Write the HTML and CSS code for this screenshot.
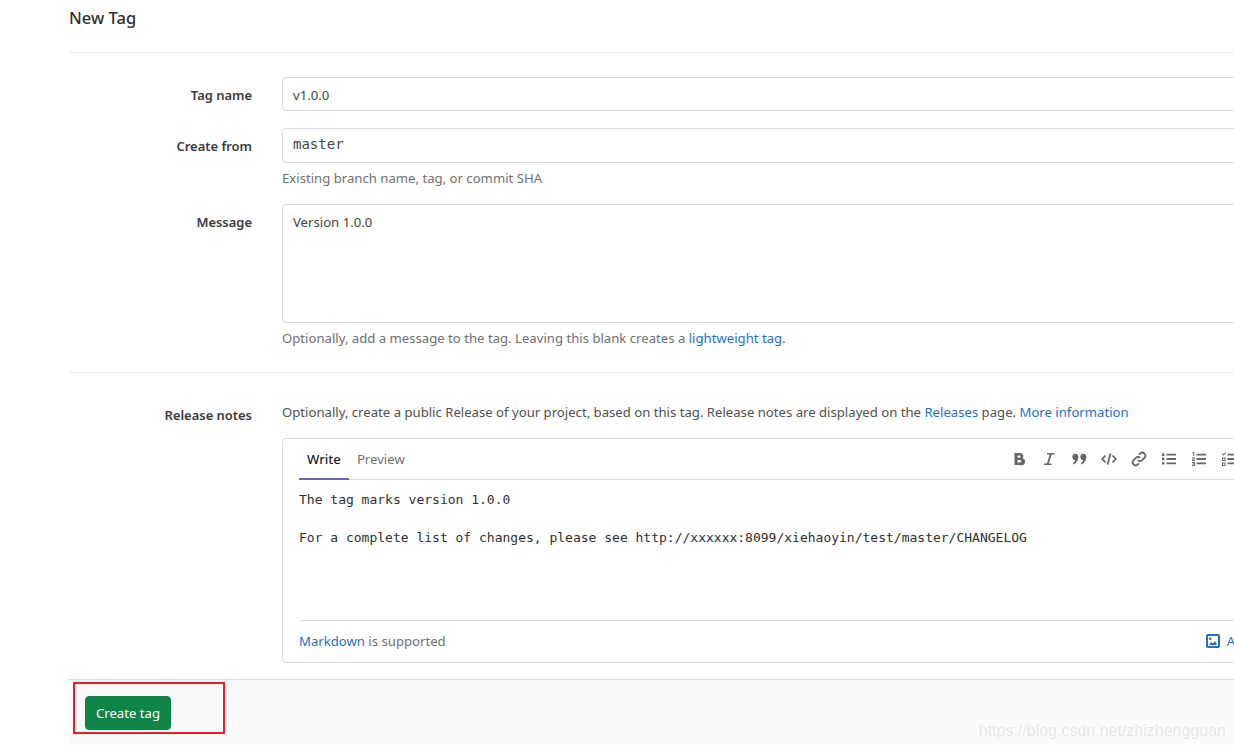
FILE: index.html
```html
<!DOCTYPE html>
<html lang="en">
<head>
<meta charset="utf-8">
<title>New Tag</title>
<link rel="stylesheet" href="styles.css">
</head>
<body>
<main class="page">
  <h1 class="title">New Tag</h1>
  <form class="form">
    <div class="section">
      <div class="row row-name">
        <label class="label">Tag name</label>
        <div class="field"><div class="input">v1.0.0</div></div>
      </div>
      <div class="row row-from">
        <label class="label">Create from</label>
        <div class="field">
          <div class="input input-mono">master</div>
          <p class="help">Existing branch name, tag, or commit SHA</p>
        </div>
      </div>
      <div class="row row-msg">
        <label class="label">Message</label>
        <div class="field">
          <div class="textarea">Version 1.0.0</div>
          <p class="help">Optionally, add a message to the tag. Leaving this blank creates a <a class="link">lightweight tag.</a></p>
        </div>
      </div>
    </div>
    <div class="section section-notes">
      <div class="row">
        <label class="label label-notes">Release notes</label>
        <div class="field">
          <p class="notes-intro">Optionally, create a public Release of your project, based on this tag. Release notes are displayed on the <a class="link">Releases</a> page. <a class="link">More information</a></p>
          <div class="md">
            <div class="md-head">
              <div class="tabs">
                <span class="tab tab-active">Write</span>
                <span class="tab">Preview</span>
              </div>
              <div class="tools">
                <svg class="tool" viewBox="0 0 16 16"><path d="M3.500 2H9a3.200 3.200 0 0 1 2.500 5.300A3.400 3.400 0 0 1 9.500 14h-6zM6.500 4.500v2.300h2a1.150 1.150 0 0 0 0-2.300zM6.500 9v2.500h2.600a1.250 1.250 0 0 0 0-2.500z" fill-rule="evenodd"/></svg>
                <svg class="tool" viewBox="0 0 16 16"><path d="M6 2h7.500v1.500h-2.800L7.800 12.500h2.700V14H3v-1.500h2.900l2.900-9H6z"/></svg>
                <svg class="tool" viewBox="0 0 16 16"><path d="M3.800 2.800A3.200 3.200 0 0 1 7.300 6c0 3.500-2 6.300-4.800 7.500l-.8-1.200C3 11.400 4 10.400 4.300 9.100A3.200 3.200 0 0 1 3.800 2.800zM11.800 2.800A3.200 3.200 0 0 1 15.300 6c0 3.500-2 6.300-4.800 7.500l-.8-1.200c1.300-.9 2.300-1.900 2.600-3.200a3.200 3.200 0 0 1-.5-6.300z"/></svg>
                <svg class="tool tool-line" viewBox="0 0 16 16"><path d="M4.500 4.500 1.200 8l3.300 3.500M11.500 4.500 14.800 8l-3.300 3.500M9.500 2.500 6.500 13.500"/></svg>
                <svg class="tool tool-line" viewBox="0 0 16 16"><path d="M6.800 9.200a3 3 0 0 0 4.300 0l2.300-2.300a3 3 0 0 0-4.300-4.300L8 3.700M9.200 6.800a3 3 0 0 0-4.300 0L2.600 9.100a3 3 0 0 0 4.300 4.300L8 12.300"/></svg>
                <svg class="tool" viewBox="0 0 16 16"><path d="M1 2.500h2.400v2.400H1zM1 6.800h2.400v2.400H1zM1 11.100h2.400v2.400H1zM5.500 2.800H15v1.800H5.500zM5.500 7.100H15v1.800H5.500zM5.500 11.400H15v1.800H5.500z"/></svg>
                <svg class="tool" viewBox="0 0 16 16"><path d="M1.500 1h1.700v4H2.200V2H1.500zM1 6.500h3v.9L2.300 9H4v.9H1V9l1.800-1.600H1zM1 11h3v4H1v-.9h2v-.7H1.500v-.8H3v-.7H1zM5.500 2.800H15v1.800H5.500zM5.500 7.100H15v1.800H5.500zM5.500 11.400H15v1.800H5.500z"/></svg>
                <svg class="tool" viewBox="0 0 16 16"><path d="M1 3l.7-.7 1 1L4.500 1l.7.700L2.700 4.700zM1 6.500h3.500V10H1zM2 7.500V9h1.500V7.500zM1 11.500h3.500V15H1zM2 12.500V14h1.500v-1.500zM6.500 7.100H15v1.800H6.500zM6.500 11.400H15v1.800H6.500zM6.500 2.800H15v1.800H6.500z" fill-rule="evenodd"/></svg>
              </div>
            </div>
            <pre class="md-body">The tag marks version 1.0.0

For a complete list of changes, please see http://xxxxxx:8099/xiehaoyin/test/master/CHANGELOG</pre>
            <div class="md-foot">
              <span class="md-hint"><a class="link">Markdown</a> is supported</span>
              <span class="attach">
                <svg class="attach-icon" viewBox="0 0 14 14"><path d="M2 0h10a2 2 0 0 1 2 2v10a2 2 0 0 1-2 2H2a2 2 0 0 1-2-2V2a2 2 0 0 1 2-2zm0 2v10h10V2zm2.200 1.500a1.300 1.300 0 1 1 0 2.600 1.300 1.300 0 0 1 0-2.600zM3 11l2.500-3 1.500 1.500L9 7l2 4z" fill-rule="evenodd"/></svg>
                <a class="link">Attach a file</a>
              </span>
            </div>
          </div>
        </div>
      </div>
    </div>
    <div class="actions">
      <button class="btn" type="button">Create tag</button>
    </div>
  </form>
</main>
<div class="annotation"></div>
<div class="watermark">https://blog.csdn.net/zhizhengguan</div>
</body>
</html>
```
FILE: styles.css
```css
html, body {
  margin: 0;
  padding: 0;
  height: 749px;
  overflow: hidden;
  background: #fff;
}
body {
  font-family: "Noto Sans", "Open Sans", sans-serif;
  font-size: 13.15px;
  color: #2e2e2e;
  position: relative;
}
.page {
  width: 1300px;
  margin-left: 69px;
}
.title {
  margin: 0;
  height: 47px;
  padding-top: 5px;
  font-size: 16.5px;
  font-weight: 500;
  line-height: 26px;
  color: #303030;
  border-bottom: 1px solid #e8e8e8;
}
.section {
  padding-top: 24px;
  padding-bottom: 24px;
}
.section-notes {
  border-top: 1px solid #e8e8e8;
  padding-top: 29px;
  padding-bottom: 16px;
}
.row {
  display: grid;
  grid-template-columns: 183px 1fr;
  column-gap: 30px;
}
.row-name { margin-bottom: 17px; }
.row-from { margin-bottom: 16px; }
.label {
  text-align: right;
  font-weight: 600;
  font-size: 12.95px;
  line-height: 20px;
  padding-top: 8px;
  color: #3a3a3a;
}
.label-notes { padding-top: 3px; }
.input {
  height: 32px;
  border: 1px solid #dcdcdc;
  border-radius: 4px;
  padding: 0 10px;
  line-height: 34px;
  color: #444;
}
.input-mono {
  height: 33px;
  line-height: 31px;
  font-family: "DejaVu Sans Mono", monospace;
  font-size: 14px;
}
.textarea {
  height: 105px;
  border: 1px solid #dcdcdc;
  border-radius: 4px;
  padding: 7px 10px 5px;
  line-height: 20px;
  color: #444;
}
.help {
  margin: 5px 0 0;
  line-height: 20px;
  color: #707070;
}
.link {
  color: #1f70c1;
  text-decoration: none;
}
.notes-intro {
  margin: 0 0 16px;
  height: 20px;
  line-height: 20px;
  color: #505050;
  white-space: nowrap;
}
.md {
  border: 1px solid #dcdcdc;
  border-radius: 4px;
  padding: 0 16px;
}
.md-head {
  display: flex;
  height: 40px;
  border-bottom: 1px solid #dcdcdc;
  justify-content: space-between;
}
.tabs {
  display: flex;
}
.tab {
  padding: 0 8px;
  line-height: 40px;
  height: 40px;
  color: #707070;
}
.tab-active {
  color: #1f1f1f;
  font-weight: 500;
  box-sizing: border-box;
  height: 41px;
  border-bottom: 2px solid #6b5fc8;
}
.tools {
  display: flex;
  align-items: center;
  column-gap: 14px;
  padding-right: 115px;
}
.tool {
  width: 16px;
  height: 16px;
  fill: #666;
}
.tool-line {
  fill: none;
  stroke: #666;
  stroke-width: 1.8;
}
.md-body {
  margin: 0;
  height: 141px;
  padding-top: 10px;
  box-sizing: border-box;
  font-family: "DejaVu Sans Mono", monospace;
  font-size: 13px;
  line-height: 19px;
  color: #2e2e2e;
  border-bottom: 1px solid #dcdcdc;
}
.md-foot {
  display: flex;
  align-items: center;
  box-sizing: border-box;
  height: 41px;
  padding-bottom: 1px;
  color: #707070;
}
.attach {
  display: flex;
  align-items: center;
  margin-left: 760px;
  column-gap: 7px;
}
.attach-icon {
  width: 14px;
  height: 14px;
  fill: #1f70c1;
}
.actions {
  box-sizing: border-box;
  height: 66px;
  background: #fafafa;
  border-top: 1px solid #dcdcdc;
  padding: 16px;
}
.btn {
  display: block;
  width: 86px;
  height: 34px;
  border: 1px solid #0f7f45;
  border-radius: 4px;
  background: #108548;
  color: #fff;
  font: inherit;
  padding: 0;
}
.annotation {
  position: absolute;
  left: 73px;
  top: 682px;
  width: 148px;
  height: 48px;
  border: 2px solid #ed1c24;
}
.watermark {
  position: absolute;
  right: 8px;
  top: 721px;
  font-family: "Liberation Sans", sans-serif;
  font-size: 16px;
  line-height: 20px;
  color: rgba(120, 120, 120, 0.16);
}
```
